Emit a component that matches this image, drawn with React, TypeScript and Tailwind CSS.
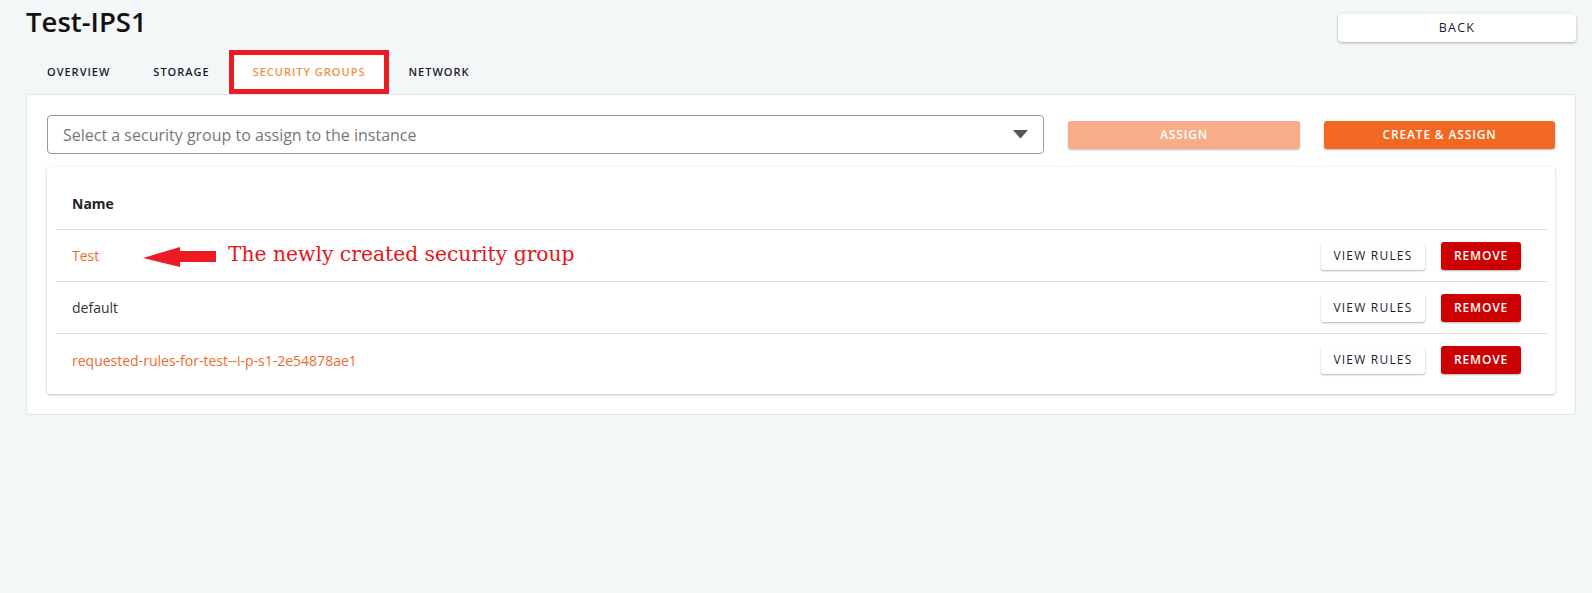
import React from "react";

const tabs = ["OVERVIEW", "STORAGE", "SECURITY GROUPS", "NETWORK"];

const groups = [
  { name: "Test", highlight: true },
  { name: "default", highlight: false },
  { name: "requested-rules-for-test--i-p-s1-2e54878ae1", highlight: true },
];

function RowActions() {
  return (
    <div className="flex items-center gap-[16px]">
      <button className="h-[28px] w-[104px] rounded-[3px] bg-white text-[12px] tracking-[0.1em] text-[#1b1b2f] shadow-[0_1px_2px_rgba(0,0,0,0.3)]">
        VIEW RULES
      </button>
      <button className="h-[28px] w-[80px] rounded-[3px] bg-[#cc0000] text-[12px] font-semibold tracking-[0.07em] text-white shadow-[0_1px_2px_rgba(0,0,0,0.3)]">
        REMOVE
      </button>
    </div>
  );
}

export default function App() {
  return (
    <div className="min-h-screen bg-[#f4f7f8] pl-[26px] pr-[16px] pt-[3px] font-['Open_Sans',sans-serif] text-[#222]">
      {/* header */}
      <div className="flex items-start justify-between">
        <h1 className="text-[27.5px] font-semibold leading-[38px] text-[#111]">Test-IPS1</h1>
        <button className="mt-[11px] h-[28px] w-[238px] rounded-[4px] bg-white text-[12.5px] tracking-[0.1em] text-[#1b1b2f] shadow-[0_1px_3px_rgba(0,0,0,0.3)]">
          BACK
        </button>
      </div>

      {/* tabs */}
      <div className="mt-[14px] flex gap-[5px] pl-[2px]">
        {tabs.map((tab) => {
          const active = tab === "SECURITY GROUPS";
          return (
            <div key={tab} className="relative">
              <div
                className={
                  active
                    ? "flex h-[38px] items-center bg-white px-[19px] pb-[6px] text-[11px] font-semibold tracking-[0.09em] text-[#f58f45]"
                    : "flex h-[38px] items-center px-[19px] pb-[6px] text-[11px] font-semibold tracking-[0.09em] text-[#1b1b2f]"
                }
              >
                {tab}
              </div>
              {active && (
                <div className="pointer-events-none absolute -left-[5px] -right-[5px] -top-[6px] bottom-0 border-[5px] border-[#ed1c24]" />
              )}
            </div>
          );
        })}
      </div>

      {/* panel */}
      <div className="rounded-[3px] border border-[#e1e6e9] bg-white px-[20px] pb-[20px] pt-[20px]">
        <div className="flex items-center gap-[24px]">
          <div className="flex h-[39px] w-[997px] shrink-0 items-center justify-between rounded-[4px] border border-[#9a9a9a] pl-[15px] pr-[15px]">
            <span className="text-[16px] text-[#777]">Select a security group to assign to the instance</span>
            <svg width="15" height="9" viewBox="0 0 15 9">
              <path d="M0 0 H15 L7.5 8.5 Z" fill="#555" />
            </svg>
          </div>
          <button className="h-[28px] w-[232px] shrink-0 rounded-[3px] bg-[#f8ad89] text-[12px] font-semibold tracking-[0.07em] text-white shadow-[0_1px_2px_rgba(0,0,0,0.25)]">
            ASSIGN
          </button>
          <button className="h-[28px] w-[231px] shrink-0 rounded-[3px] bg-[#f26722] text-[12px] font-semibold tracking-[0.07em] text-white shadow-[0_1px_2px_rgba(0,0,0,0.25)]">
            CREATE &amp; ASSIGN
          </button>
        </div>

        <div className="mt-[13px] rounded-[4px] bg-white pb-[8px] pl-[9px] pr-[8px] shadow-[0_1px_3px_rgba(0,0,0,0.25)]">
          <div className="flex h-[63px] items-center border-b border-[#dcdcdc] pl-[16px] pt-[10px] text-[14px] font-bold text-[#222]">
            Name
          </div>
          <div className="divide-y divide-[#dcdcdc]">
            {groups.map((g, i) => (
              <div key={g.name} className="relative flex h-[52px] items-center justify-between pl-[16px] pr-[26px]">
                <span className={g.highlight ? "text-[14px] text-[#f26a2e]" : "text-[14px] text-[#333]"}>{g.name}</span>
                {i === 0 && (
                  <div className="pointer-events-none absolute bottom-0 left-[87px] top-0 flex items-center gap-[12px]">
                    <svg width="73" height="20" viewBox="0 0 73 20" className="mt-[2px]">
                      <path d="M0 11 L37 0 L37 4 L73 4 L73 15 L37 15 L37 20 Z" fill="#ed1c24" />
                    </svg>
                    <span className="mb-[3px] font-['DejaVu_Serif',serif] text-[20.3px] leading-none text-[#e8141b]">
                      The newly created security group
                    </span>
                  </div>
                )}
                <RowActions />
              </div>
            ))}
          </div>
        </div>
      </div>
    </div>
  );
}
